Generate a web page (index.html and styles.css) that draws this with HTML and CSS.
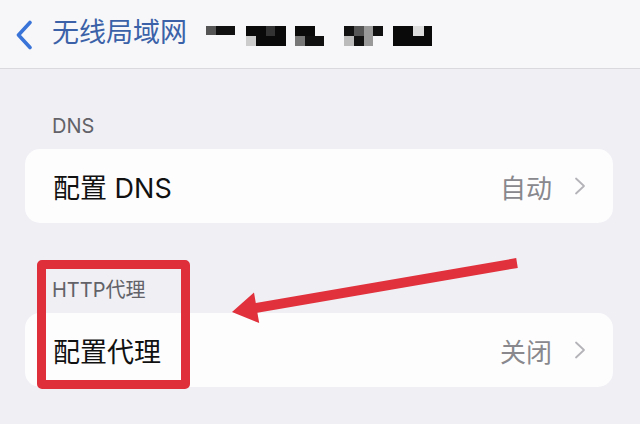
FILE: index.html
```html
<!DOCTYPE html>
<html lang="zh-CN">
<head>
<meta charset="utf-8">
<title>无线局域网</title>
<link rel="stylesheet" href="styles.css">
</head>
<body>
<div class="page">
  <header class="navbar">
    <svg class="back" width="18" height="30" viewBox="0 0 18 30"><polyline points="15,2.5 3.5,15 15,27.5" fill="none" stroke="#3a74d8" stroke-width="3.6" stroke-linecap="round" stroke-linejoin="round"/></svg>
    <span class="nav-title">无线局域网</span>
    <svg class="mosaic" width="226" height="20" viewBox="0 0 226 20">
      <rect x="0" y="0" width="10" height="9" fill="#555"/>
      <rect x="10" y="0" width="19" height="9" fill="#111"/>
      <rect x="40" y="0" width="20" height="10" fill="#0a0a0a"/>
      <rect x="60" y="0" width="9" height="10" fill="#333"/>
      <rect x="69" y="0" width="11" height="10" fill="#0a0a0a"/>
      <rect x="40" y="10" width="10" height="10" fill="#ccc"/>
      <rect x="50" y="10" width="30" height="10" fill="#0a0a0a"/>
      <rect x="89" y="0" width="20" height="10" fill="#0a0a0a"/>
      <rect x="89" y="10" width="10" height="10" fill="#777"/>
      <rect x="99" y="10" width="19" height="10" fill="#111"/>
      <rect x="138" y="0" width="10" height="10" fill="#111"/>
      <rect x="148" y="0" width="10" height="10" fill="#555"/>
      <rect x="158" y="0" width="9" height="10" fill="#999"/>
      <rect x="167" y="0" width="10" height="10" fill="#111"/>
      <rect x="138" y="10" width="10" height="10" fill="#bbb"/>
      <rect x="148" y="10" width="10" height="10" fill="#111"/>
      <rect x="158" y="10" width="9" height="10" fill="#999"/>
      <rect x="187" y="0" width="20" height="10" fill="#0a0a0a"/>
      <rect x="207" y="0" width="11" height="10" fill="#ddd"/>
      <rect x="218" y="0" width="8" height="10" fill="#0a0a0a"/>
      <rect x="187" y="10" width="39" height="10" fill="#0a0a0a"/>
    </svg>
  </header>

  <main class="content">
    <section class="group group-dns">
      <div class="group-label">DNS</div>
      <div class="card">
        <span class="row-title">配置 DNS</span>
        <span class="row-value">自动</span>
        <svg class="chev" width="12" height="18" viewBox="0 0 12 18"><polyline points="2,1.5 10,9 2,16.5" fill="none" stroke="#b3b3b8" stroke-width="1.8" stroke-linecap="round" stroke-linejoin="round"/></svg>
      </div>
    </section>

    <section class="group group-proxy">
      <div class="group-label">HTTP代理</div>
      <div class="card">
        <span class="row-title">配置代理</span>
        <span class="row-value">关闭</span>
        <svg class="chev" width="12" height="18" viewBox="0 0 12 18"><polyline points="2,1.5 10,9 2,16.5" fill="none" stroke="#b3b3b8" stroke-width="1.8" stroke-linecap="round" stroke-linejoin="round"/></svg>
      </div>
    </section>
  </main>

  <div class="highlight-box"></div>
  <svg class="arrow" width="640" height="424" viewBox="0 0 640 424">
    <polygon points="516.2,258.1 255.8,302.9 254,292.5 232,312 259.2,323.1 257.4,312.7 517.8,267.9" fill="#e0313c"/>
  </svg>
</div>
</body>
</html>
```

FILE: styles.css
```css
html, body {
  margin: 0;
  padding: 0;
}
body {
  background: #efeff4;
  font-family: Inter, "Noto Sans CJK SC", sans-serif;
  width: 640px;
  height: 424px;
  overflow: hidden;
}
.page {
  position: relative;
  width: 640px;
  height: 424px;
}
.navbar {
  height: 68px;
  background: #f7f7f9;
  border-bottom: 1px solid #d9d9de;
  display: flex;
  align-items: center;
  padding-left: 15px;
  box-sizing: content-box;
}
.back {
  display: block;
  margin-top: 1px;
}
.nav-title {
  margin-left: 19px;
  font-size: 27px;
  line-height: 32px;
  color: #3b62a8;
  margin-top: -2px;
}
.mosaic {
  display: block;
  margin-left: 19px;
  margin-top: 4px;
}
.content {
  padding: 0 27px 0 25px;
}
.group-label {
  font-size: 20px;
  line-height: 24px;
  color: #626268;
  padding-left: 27px;
  margin-bottom: 11px;
}
.group-dns {
  padding-top: 45px;
}
.group-proxy {
  padding-top: 55px;
}
.card {
  height: 74px;
  background: #fdfdfe;
  border-radius: 15px;
  display: flex;
  align-items: center;
  padding: 0 27px 0 28px;
}
.row-title {
  font-size: 27px;
  color: #111;
  flex: 1;
}
.row-value {
  font-size: 26px;
  color: #88888d;
  margin-right: 22px;
}
.chev {
  display: block;
}
.highlight-box {
  position: absolute;
  left: 37px;
  top: 260px;
  width: 153px;
  height: 129px;
  box-sizing: border-box;
  border: 9px solid #de2f3b;
  border-radius: 5px;
}
.arrow {
  position: absolute;
  left: 0;
  top: 0;
}
```
